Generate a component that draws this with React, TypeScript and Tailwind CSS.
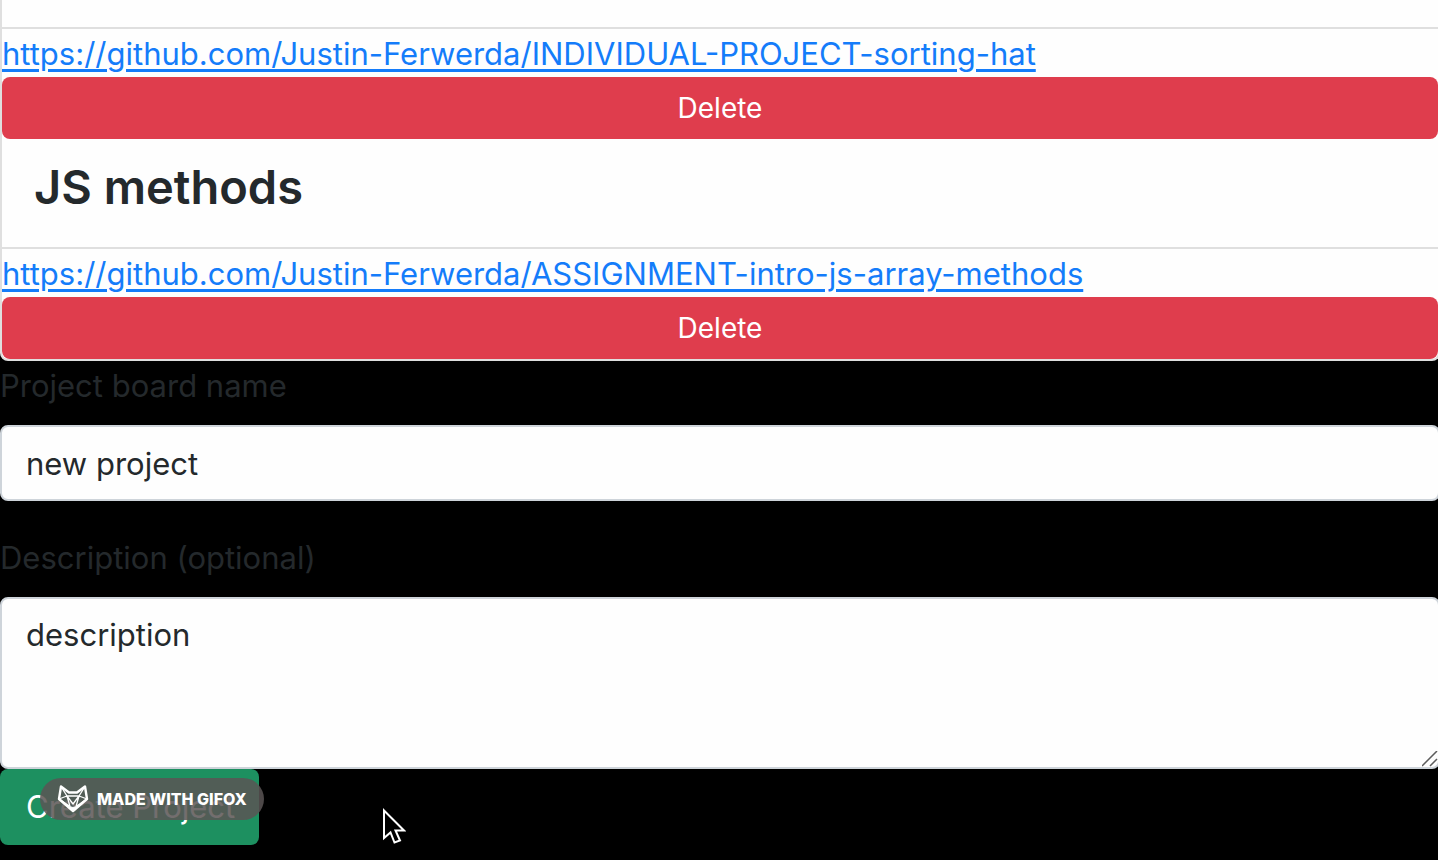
import { useId } from "react";

const FONT = "font-['Inter','Liberation_Sans',sans-serif]";

function DeleteButton() {
  return (
    <button
      type="button"
      className="block h-[62px] w-full rounded-lg bg-[#df3d4d] text-[28px] leading-[42px] text-white"
    >
      Delete
    </button>
  );
}

function RepoLink({ href }: { href: string }) {
  return (
    <a
      href={href}
      className="block h-12 whitespace-nowrap text-[31px] leading-[50px] text-[#147cfa] underline decoration-3 underline-offset-4"
    >
      {href}
    </a>
  );
}

function ProjectCard({ title, href, last }: { title?: string; href: string; last?: boolean }) {
  return (
    <article
      className={
        last
          ? "overflow-hidden rounded-b-lg border-x-2 border-b-2 border-[#dfdfdf] bg-[#fefefe]"
          : "border-x-2 border-[#dfdfdf] bg-[#fefefe]"
      }
    >
      {title ? (
        <header className="h-[110px] border-b-2 border-[#dfdfdf] px-8 pt-[18px]">
          <h4 className="text-[47px] leading-[60px] font-semibold text-[#24292c]">{title}</h4>
        </header>
      ) : (
        <div className="h-[29px] border-b-2 border-[#dfdfdf]" />
      )}
      <RepoLink href={href} />
      <DeleteButton />
    </article>
  );
}

function ResizeGrip() {
  return (
    <svg
      className="pointer-events-none absolute right-0.5 bottom-0.5 h-4 w-4"
      viewBox="0 0 16 16"
      fill="none"
      stroke="#5c5c5c"
      strokeWidth="1.5"
      aria-hidden="true"
    >
      <path d="M0 15L15 0M8 15L15 8" />
    </svg>
  );
}

function FoxLogo() {
  return (
    <svg
      className="h-7 w-8 shrink-0"
      viewBox="0 0 32 28"
      fill="none"
      stroke="#fff"
      strokeLinejoin="round"
      aria-hidden="true"
    >
      <path strokeWidth="2.4" d="M4 1.500L12 7.500H20L28 1.500L30 14L16 26L2 14Z" />
      <path
        strokeWidth="1.3"
        d="M4 1.500L10 11L2 14L13 21.500M28 1.500L22 11L30 14L19 21.500M10 11L13 21.500M22 11L19 21.500M10 11H22L16 19Z"
      />
      <path d="M12.500 21.500L16 22.500L19.500 21.500L16 26Z" fill="#fff" />
    </svg>
  );
}

function Pointer() {
  return (
    <svg
      className="pointer-events-none absolute top-[38px] left-[382px] h-10 w-6"
      viewBox="0 0 24 40"
      fill="#000"
      stroke="#fff"
      strokeWidth="2"
      aria-hidden="true"
    >
      <path d="M2 3.500L22 23.500H13.500L18 33.500L12.500 35.500L8.500 25.500L2 31Z" />
    </svg>
  );
}

export default function App() {
  const nameId = useId();
  const descriptionId = useId();
  const field =
    "block w-full rounded-lg border-2 border-[#ced4da] bg-[#fefefe] px-6 text-[31px] leading-12 text-[#24292c] outline-none";
  const label = "mb-4 block text-[31px] leading-[50px] h-12 text-[#24292c]";

  return (
    <main className={`min-h-screen overflow-hidden bg-black ${FONT}`}>
      <div className="-mr-0.5">
        <section className="bg-black">
          <ProjectCard href="https://github.com/Justin-Ferwerda/INDIVIDUAL-PROJECT-sorting-hat" />
          <ProjectCard
            title="JS methods"
            href="https://github.com/Justin-Ferwerda/ASSIGNMENT-intro-js-array-methods"
            last
          />
        </section>
        <form onSubmit={(event) => event.preventDefault()}>
          <div className="mb-8">
            <label htmlFor={nameId} className={label}>
              Project board name
            </label>
            <input id={nameId} type="text" defaultValue="new project" className={`${field} h-[76px]`} />
          </div>
          <div>
            <label htmlFor={descriptionId} className={label}>
              Description (optional)
            </label>
            <div className="relative">
              <textarea
                id={descriptionId}
                rows={3}
                defaultValue="description"
                className={`${field} resize-none py-3`}
              />
              <ResizeGrip />
            </div>
          </div>
          <div className="relative">
            <button
              type="submit"
              className="block h-[76px] rounded-lg bg-[#1d9060] pr-6 pl-[26px] text-[31px] leading-12 text-white"
            >
              Create Project
            </button>
            <div className="absolute top-[9px] left-10 flex h-[42px] w-56 items-center gap-2 rounded-full bg-[#5a5555]/85 pl-[17px] text-base font-extrabold whitespace-nowrap text-white">
              <FoxLogo />
              <span>MADE WITH GIFOX</span>
            </div>
            <Pointer />
          </div>
        </form>
      </div>
    </main>
  );
}
